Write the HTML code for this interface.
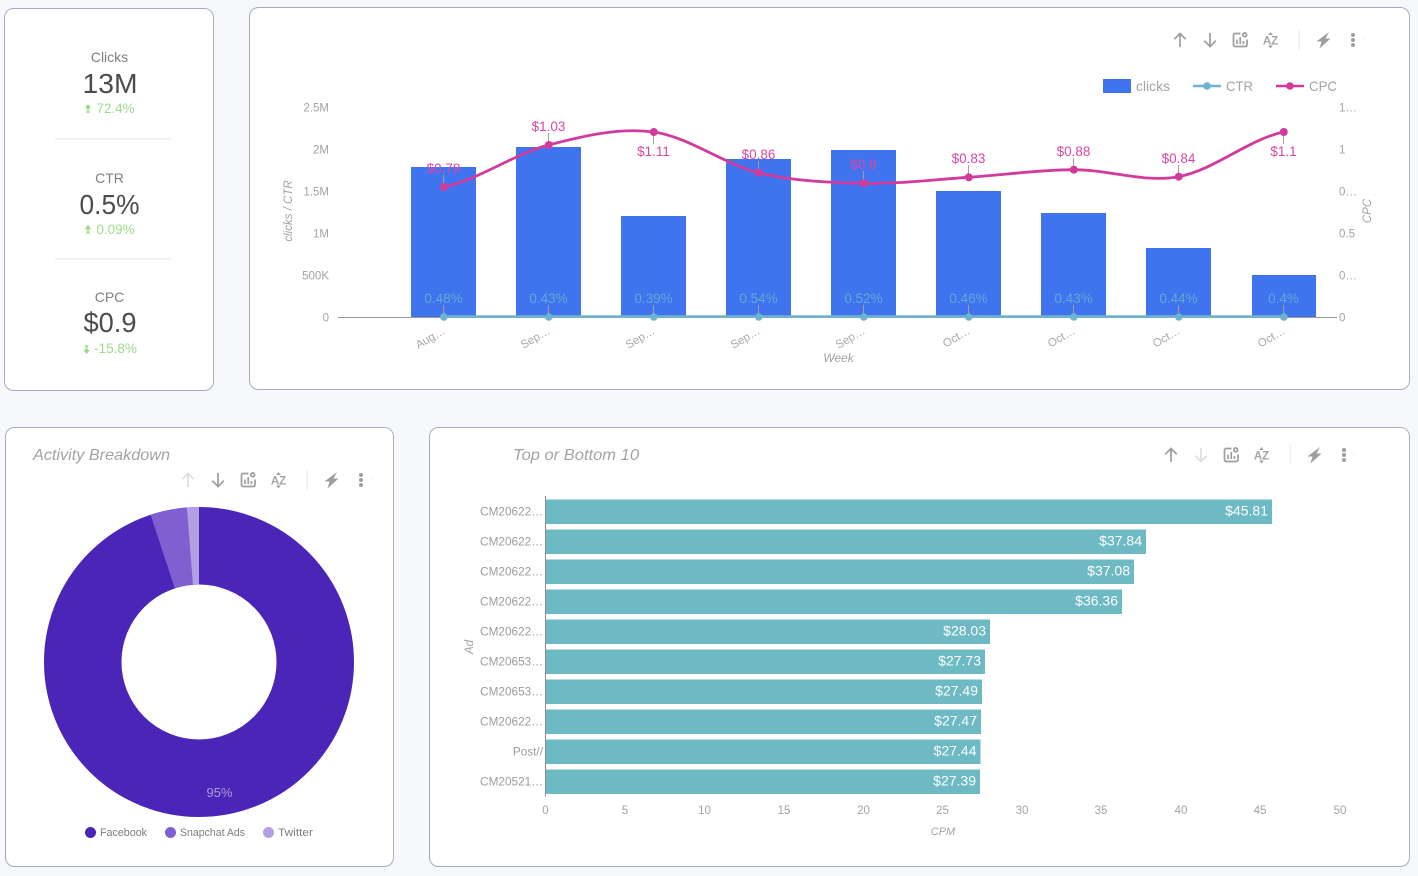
<!DOCTYPE html>
<html><head><meta charset="utf-8"><style>
html,body{margin:0;padding:0;background:#f6f8fc}
svg{display:block}
text{font-family:"Liberation Sans",sans-serif}
.card{fill:#fff;stroke:#a9aac2;stroke-width:1}
.ax{font-size:11.5px;fill:#a3a3a3}
.it{font-style:italic;fill:#a3a3a3}
.cpc{font-size:13.5px;fill:#dc45a4;text-anchor:middle}
.ctr{font-size:13.5px;fill:#63a9d4;text-anchor:middle}
.ld{stroke:#a0a0a0;stroke-width:1;fill:none}
.kl{font-size:14px;fill:#7f7f7f;text-anchor:middle}
.kv{font-size:28px;fill:#4c4c4c;text-anchor:middle}
.kd{font-size:13.5px;fill:#9bdc88}
.xl{font-size:11.5px;fill:#a8a8a8;text-anchor:end}
.yl{font-size:11.8px;fill:#9c9c9c;text-anchor:end}
.val{font-size:14px;fill:#fff;text-anchor:end}
.xb{font-size:11.5px;fill:#a3a3a3;text-anchor:middle}
.lg{font-size:14px;fill:#a3a3a3}
.ld2{font-size:11px;fill:#7d7d7d}
.i{stroke:#9e9e9e;fill:none;stroke-width:1.7}
.f{fill:#9e9e9e;stroke:none}
.az{font-size:11.5px;font-weight:bold;fill:#a6a6a6;text-anchor:middle}
</style></head><body>
<svg width="1418" height="876" viewBox="0 0 1418 876" xmlns="http://www.w3.org/2000/svg">
<rect width="1418" height="876" fill="#f6f8fc"/>
<rect class="card" x="4.5" y="8.5" width="209" height="382" rx="9"/>
<rect class="card" x="249.5" y="7.5" width="1160" height="382" rx="9"/>
<rect class="card" x="5.5" y="427.5" width="388" height="439" rx="9"/>
<rect class="card" x="429.5" y="427.5" width="980" height="439" rx="9"/>

<!-- KPIs -->
<text class="kl" x="109.5" y="62">Clicks</text>
<text class="kv" x="110" y="93" textLength="55" lengthAdjust="spacingAndGlyphs">13M</text>
<path d="M88 104l-3.2 3.8h1.6v1.2h3.2v-1.2h1.6zM86.4 109.6h3.2v1.1h-3.2zM86.4 111.3h3.2v1.6h-3.2z" fill="#9bdc88"/>
<text class="kd" x="96.5" y="113" textLength="38" lengthAdjust="spacingAndGlyphs">72.4%</text>
<rect x="55" y="138" width="116" height="1.6" fill="#ececec"/>
<text class="kl" x="109.5" y="183">CTR</text>
<text class="kv" x="109.5" y="214" textLength="60" lengthAdjust="spacingAndGlyphs">0.5%</text>
<path d="M88 225l-3.2 3.8h1.6v1.2h3.2v-1.2h1.6zM86.4 230.6h3.2v1.1h-3.2zM86.4 232.3h3.2v1.6h-3.2z" fill="#9bdc88"/>
<text class="kd" x="96.5" y="234" textLength="38" lengthAdjust="spacingAndGlyphs">0.09%</text>
<rect x="55" y="258" width="116" height="1.6" fill="#ececec"/>
<text class="kl" x="109.5" y="302">CPC</text>
<text class="kv" x="110" y="332" textLength="53" lengthAdjust="spacingAndGlyphs">$0.9</text>
<path d="M86.5 354l-3.2-3.8h1.6v-1.2h3.2v1.2h1.6zM84.9 348.4h3.2v-1.1h-3.2zM84.9 346.7h3.2v-1.6h-3.2z" fill="#9bdc88"/>
<text class="kd" x="94" y="353" textLength="43" lengthAdjust="spacingAndGlyphs">-15.8%</text>

<!-- Top toolbar -->
<g>
<path class="i" d="M1180 47V33.5M1174.2 39.3L1180 33.5L1185.8 39.3"/>
<path class="i" d="M1210 33V46.5M1204.2 40.7L1210 46.5L1215.8 40.7"/>
<path class="i" d="M1240.5 33.5H1235a1.5 1.5 0 0 0-1.5 1.5V45a1.5 1.5 0 0 0 1.5 1.5H1245.5a1.5 1.5 0 0 0 1.5-1.5V39.5"/>
<path class="i" d="M1237 44V39.5M1240.2 44V37M1243.4 44V41"/>
<circle class="i" cx="1244.7" cy="34.8" r="1.9" stroke-width="1.5"/>
<text class="az" x="1270.5" y="44.7">AZ</text>
<path class="f" d="M1270.5 32l2.2 3h-4.4zM1270.5 48.5l2.2-3h-4.4z"/>
<rect x="1298.5" y="30" width="1.4" height="20" fill="#eeeeee"/>
<path class="f" d="M1329 32L1316.5 41.5H1321.5L1319.5 48.5L1330.5 38.5H1325.5Z"/>
<circle class="f" cx="1353" cy="35" r="2"/><circle class="f" cx="1353" cy="40" r="2"/><circle class="f" cx="1353" cy="45" r="2"/>
<rect x="1362.5" y="37.5" width="1" height="4" fill="#eeeeee"/>
</g>

<!-- Legend -->
<rect x="1103" y="79" width="28" height="14" fill="#4074ee"/>
<text class="lg" x="1136" y="91" textLength="34" lengthAdjust="spacingAndGlyphs">clicks</text>
<path d="M1193 86h28" stroke="#6db4cf" stroke-width="2.6"/><circle cx="1207" cy="86" r="3.8" fill="#6db4cf"/>
<text class="lg" x="1226" y="91" textLength="27" lengthAdjust="spacingAndGlyphs">CTR</text>
<path d="M1276 86h28" stroke="#d23b9b" stroke-width="2.6"/><circle cx="1290" cy="86" r="3.8" fill="#d23b9b"/>
<text class="lg" x="1309" y="91" textLength="28" lengthAdjust="spacingAndGlyphs">CPC</text>

<!-- Combo axes -->
<g class="ax" text-anchor="end">
<text x="329" y="111.5">2.5M</text><text x="329" y="153.5">2M</text><text x="329" y="195.5">1.5M</text><text x="329" y="237.5">1M</text><text x="329" y="279.5">500K</text><text x="329" y="321.5">0</text>
</g>
<g class="ax">
<text x="1339" y="111.5">1…</text><text x="1339" y="153.5">1</text><text x="1339" y="195.5">0…</text><text x="1339" y="237.5">0.5</text><text x="1339" y="279.5">0…</text><text x="1339" y="321.5">0</text>
</g>
<text class="it" font-size="11.5" text-anchor="middle" transform="translate(292 211) rotate(-90)">clicks / CTR</text>
<text class="it" font-size="11.5" text-anchor="middle" transform="translate(1371 211) rotate(-90)">CPC</text>
<text class="it" font-size="12" text-anchor="middle" x="838.5" y="362">Week</text>
<path d="M338 317.5H1337" stroke="#9a9a9a" stroke-width="1"/>

<!-- Bars -->
<g fill="#4074ee">
<rect x="411" y="167" width="65" height="150"/>
<rect x="516" y="147" width="65" height="170"/>
<rect x="621" y="216" width="65" height="101"/>
<rect x="726" y="159" width="65" height="158"/>
<rect x="831" y="150" width="65" height="167"/>
<rect x="936" y="191" width="65" height="126"/>
<rect x="1041" y="213" width="65" height="104"/>
<rect x="1146" y="248" width="65" height="69"/>
<rect x="1252" y="275" width="64" height="42"/>
</g>

<!-- Leaders -->
<path class="ld" d="M443.5 175V184M548.5 133V143M653.5 134V144M758.5 161V171M863.5 171V181M968.5 165V175M1073.5 158V168M1178.5 165V175M1283.5 134V144"/>
<path class="ld" d="M443.5 305V315M548.5 305V315M653.5 305V315M758.5 305V315M863.5 305V315M968.5 305V315M1073.5 305V315M1178.5 305V315M1283.5 305V315"/>

<!-- CTR line -->
<path d="M443.5 316.5H1283.5" stroke="#6db4cf" stroke-width="2.4"/>
<g fill="#6db4cf">
<circle cx="443.8" cy="317" r="3.8"/><circle cx="548.8" cy="317" r="3.8"/><circle cx="653.8" cy="317" r="3.8"/><circle cx="758.8" cy="317" r="3.8"/><circle cx="863.8" cy="317" r="3.8"/><circle cx="968.8" cy="317" r="3.8"/><circle cx="1073.8" cy="317" r="3.8"/><circle cx="1178.8" cy="317" r="3.8"/><circle cx="1283.8" cy="317" r="3.8"/>
</g>

<!-- CPC line -->
<path fill="none" stroke="#d23b9b" stroke-width="2.8" d="M443.5 187C478.5 180 513.5 154.17 548.5 145C583.5 135.83 618.5 127.38 653.5 132C688.5 136.62 723.5 164.15 758.5 172.7C793.5 181.25 828.5 182.53 863.5 183.3C898.5 184.07 933.5 179.57 968.5 177.3C1003.5 175.03 1038.5 169.8 1073.5 169.7C1108.5 169.6 1143.5 183 1178.5 176.7C1213.5 170.4 1248.5 139.33 1283.5 132"/>
<g fill="#d23b9b">
<circle cx="443.8" cy="187" r="4"/><circle cx="548.8" cy="145" r="4"/><circle cx="653.8" cy="132" r="4"/><circle cx="758.8" cy="172.7" r="4"/><circle cx="863.8" cy="183.3" r="4"/><circle cx="968.8" cy="177.3" r="4"/><circle cx="1073.8" cy="169.7" r="4"/><circle cx="1178.8" cy="176.7" r="4"/><circle cx="1283.8" cy="132" r="4"/>
</g>

<!-- Labels -->
<text class="cpc" x="443.5" y="173">$0.78</text>
<text class="cpc" x="548.5" y="131">$1.03</text>
<text class="cpc" x="653.5" y="156">$1.11</text>
<text class="cpc" x="758.5" y="159">$0.86</text>
<text class="cpc" x="863.5" y="169">$0.8</text>
<text class="cpc" x="968.5" y="163">$0.83</text>
<text class="cpc" x="1073.5" y="156">$0.88</text>
<text class="cpc" x="1178.5" y="163">$0.84</text>
<text class="cpc" x="1283.5" y="156">$1.1</text>
<text class="ctr" x="443.5" y="303">0.48%</text>
<text class="ctr" x="548.5" y="303">0.43%</text>
<text class="ctr" x="653.5" y="303">0.39%</text>
<text class="ctr" x="758.5" y="303">0.54%</text>
<text class="ctr" x="863.5" y="303">0.52%</text>
<text class="ctr" x="968.5" y="303">0.46%</text>
<text class="ctr" x="1073.5" y="303">0.43%</text>
<text class="ctr" x="1178.5" y="303">0.44%</text>
<text class="ctr" x="1283.5" y="303">0.4%</text>

<text class="xl" transform="translate(446 333) rotate(-30)">Aug…</text>
<text class="xl" transform="translate(551 333) rotate(-30)">Sep…</text>
<text class="xl" transform="translate(656 333) rotate(-30)">Sep…</text>
<text class="xl" transform="translate(761 333) rotate(-30)">Sep…</text>
<text class="xl" transform="translate(866 333) rotate(-30)">Sep…</text>
<text class="xl" transform="translate(971 333) rotate(-30)">Oct…</text>
<text class="xl" transform="translate(1076 333) rotate(-30)">Oct…</text>
<text class="xl" transform="translate(1181 333) rotate(-30)">Oct…</text>
<text class="xl" transform="translate(1286 333) rotate(-30)">Oct…</text>

<!-- Donut card -->
<text class="it" font-size="16" x="33" y="460" textLength="137" lengthAdjust="spacingAndGlyphs">Activity Breakdown</text>
<g>
<path class="i" style="stroke:#dedede" d="M188 487V473.5M182.2 479.3L188 473.5L193.8 479.3"/>
<path class="i" d="M218 473V486.5M212.2 480.7L218 486.5L223.8 480.7"/>
<path class="i" d="M248.5 473.5H243a1.5 1.5 0 0 0-1.5 1.5V485a1.5 1.5 0 0 0 1.5 1.5H253.5a1.5 1.5 0 0 0 1.5-1.5V479.5"/>
<path class="i" d="M245 484V479.5M248.2 484V477M251.4 484V481"/>
<circle class="i" cx="252.7" cy="474.8" r="1.9" stroke-width="1.5"/>
<text class="az" x="278.5" y="484.7">AZ</text>
<path class="f" d="M278.5 472l2.2 3h-4.4zM278.5 488.5l2.2-3h-4.4z"/>
<rect x="306.5" y="470" width="1.4" height="20" fill="#eeeeee"/>
<path class="f" d="M337 472L324.5 481.5H329.5L327.5 488.5L338.5 478.5H333.5Z"/>
<circle class="f" cx="361" cy="475" r="2"/><circle class="f" cx="361" cy="480" r="2"/><circle class="f" cx="361" cy="485" r="2"/>
<rect x="370.5" y="477.5" width="1" height="4" fill="#eeeeee"/>
</g>
<circle cx="199" cy="662" r="116.25" fill="none" stroke="#4a25b8" stroke-width="77.5"/>
<path d="M150.6 514.8A155 155 0 0 1 186.8 507.5L192.9 584.7A77.5 77.5 0 0 0 174.8 588.4Z" fill="#8060d0"/>
<path d="M186.8 507.5A155 155 0 0 1 199 507V584.5A77.5 77.5 0 0 0 192.9 584.7Z" fill="#b3a0e4"/>
<text x="219.5" y="797" font-size="13" fill="#ab9dd6" text-anchor="middle">95%</text>
<circle cx="90.5" cy="832.5" r="5.5" fill="#4a25b8"/>
<text class="ld2" x="100" y="836" textLength="47" lengthAdjust="spacingAndGlyphs">Facebook</text>
<circle cx="170.5" cy="832.5" r="5.5" fill="#8060d0"/>
<text class="ld2" x="180" y="836" textLength="65" lengthAdjust="spacingAndGlyphs">Snapchat Ads</text>
<circle cx="268.5" cy="832.5" r="5.5" fill="#b3a0e4"/>
<text class="ld2" x="278" y="836" textLength="35" lengthAdjust="spacingAndGlyphs">Twitter</text>

<!-- Bar card -->
<text class="it" font-size="16" x="513" y="460" textLength="126" lengthAdjust="spacingAndGlyphs">Top or Bottom 10</text>
<g>
<path class="i" d="M1171 462V448.5M1165.2 454.3L1171 448.5L1176.8 454.3"/>
<path class="i" style="stroke:#dedede" d="M1201 448V461.5M1195.2 455.7L1201 461.5L1206.8 455.7"/>
<path class="i" d="M1231.5 448.5H1226a1.5 1.5 0 0 0-1.5 1.5V460a1.5 1.5 0 0 0 1.5 1.5H1236.5a1.5 1.5 0 0 0 1.5-1.5V454.5"/>
<path class="i" d="M1228 459V454.5M1231.2 459V452M1234.4 459V456"/>
<circle class="i" cx="1235.7" cy="449.8" r="1.9" stroke-width="1.5"/>
<text class="az" x="1261.5" y="459.7">AZ</text>
<path class="f" d="M1261.5 447l2.2 3h-4.4zM1261.5 463.5l2.2-3h-4.4z"/>
<rect x="1289.5" y="445" width="1.4" height="20" fill="#eeeeee"/>
<path class="f" d="M1320 447L1307.5 456.5H1312.5L1310.5 463.5L1321.5 453.5H1316.5Z"/>
<circle class="f" cx="1344" cy="450" r="2"/><circle class="f" cx="1344" cy="455" r="2"/><circle class="f" cx="1344" cy="460" r="2"/>
<rect x="1353.5" y="452.5" width="1" height="4" fill="#eeeeee"/>
</g>
<g fill="#6dbac5">
<rect x="546" y="499.5" width="726" height="24.5"/>
<rect x="546" y="529.5" width="600" height="24.5"/>
<rect x="546" y="559.5" width="588" height="24.5"/>
<rect x="546" y="589.5" width="576" height="24.5"/>
<rect x="546" y="619.5" width="444" height="24.5"/>
<rect x="546" y="649.5" width="439" height="24.5"/>
<rect x="546" y="679.5" width="436" height="24.5"/>
<rect x="546" y="709.5" width="435" height="24.5"/>
<rect x="546" y="739.5" width="434.5" height="24.5"/>
<rect x="546" y="769.5" width="434" height="24.5"/>
</g>
<path d="M545.5 496V796.5" stroke="#8d8d8d" stroke-width="1"/>
<text class="val" x="1268" y="515.7">$45.81</text>
<text class="val" x="1142" y="545.7">$37.84</text>
<text class="val" x="1130" y="575.7">$37.08</text>
<text class="val" x="1118" y="605.7">$36.36</text>
<text class="val" x="986" y="635.7">$28.03</text>
<text class="val" x="981" y="665.7">$27.73</text>
<text class="val" x="978" y="695.7">$27.49</text>
<text class="val" x="977" y="725.7">$27.47</text>
<text class="val" x="976.5" y="755.7">$27.44</text>
<text class="val" x="976" y="785.7">$27.39</text>
<text class="yl" x="543" y="515.7">CM20622…</text>
<text class="yl" x="543" y="545.7">CM20622…</text>
<text class="yl" x="543" y="575.7">CM20622…</text>
<text class="yl" x="543" y="605.7">CM20622…</text>
<text class="yl" x="543" y="635.7">CM20622…</text>
<text class="yl" x="543" y="665.7">CM20653…</text>
<text class="yl" x="543" y="695.7">CM20653…</text>
<text class="yl" x="543" y="725.7">CM20622…</text>
<text class="yl" x="543" y="755.7">Post//</text>
<text class="yl" x="543" y="785.7">CM20521…</text>
<text class="it" font-size="11.5" text-anchor="middle" transform="translate(473 647) rotate(-90)">Ad</text>
<text class="xb" x="545.5" y="814">0</text>
<text class="xb" x="625" y="814">5</text>
<text class="xb" x="704.5" y="814">10</text>
<text class="xb" x="784" y="814">15</text>
<text class="xb" x="863.5" y="814">20</text>
<text class="xb" x="942.5" y="814">25</text>
<text class="xb" x="1022" y="814">30</text>
<text class="xb" x="1101" y="814">35</text>
<text class="xb" x="1181" y="814">40</text>
<text class="xb" x="1260" y="814">45</text>
<text class="xb" x="1340" y="814">50</text>
<text class="it" font-size="11" text-anchor="middle" x="943" y="835">CPM</text>
</svg>
</body></html>
